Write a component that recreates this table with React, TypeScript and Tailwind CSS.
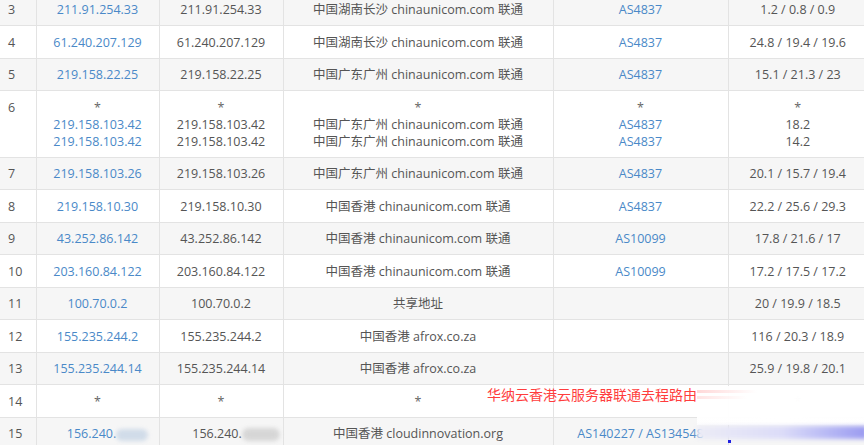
import React from "react";

type Cell = string | string[];
type Row = { n: string; ip: Cell; host: Cell; loc: Cell; asn: Cell; rtt: Cell; blur?: boolean };

const rows: Row[] = [
  { n: "3", ip: "211.91.254.33", host: "211.91.254.33", loc: "中国湖南长沙 chinaunicom.com 联通", asn: "AS4837", rtt: "1.2 / 0.8 / 0.9" },
  { n: "4", ip: "61.240.207.129", host: "61.240.207.129", loc: "中国湖南长沙 chinaunicom.com 联通", asn: "AS4837", rtt: "24.8 / 19.4 / 19.6" },
  { n: "5", ip: "219.158.22.25", host: "219.158.22.25", loc: "中国广东广州 chinaunicom.com 联通", asn: "AS4837", rtt: "15.1 / 21.3 / 23" },
  {
    n: "6",
    ip: ["*", "219.158.103.42", "219.158.103.42"],
    host: ["*", "219.158.103.42", "219.158.103.42"],
    loc: ["*", "中国广东广州 chinaunicom.com 联通", "中国广东广州 chinaunicom.com 联通"],
    asn: ["*", "AS4837", "AS4837"],
    rtt: ["*", "18.2", "14.2"],
  },
  { n: "7", ip: "219.158.103.26", host: "219.158.103.26", loc: "中国广东广州 chinaunicom.com 联通", asn: "AS4837", rtt: "20.1 / 15.7 / 19.4" },
  { n: "8", ip: "219.158.10.30", host: "219.158.10.30", loc: "中国香港 chinaunicom.com 联通", asn: "AS4837", rtt: "22.2 / 25.6 / 29.3" },
  { n: "9", ip: "43.252.86.142", host: "43.252.86.142", loc: "中国香港 chinaunicom.com 联通", asn: "AS10099", rtt: "17.8 / 21.6 / 17" },
  { n: "10", ip: "203.160.84.122", host: "203.160.84.122", loc: "中国香港 chinaunicom.com 联通", asn: "AS10099", rtt: "17.2 / 17.5 / 17.2" },
  { n: "11", ip: "100.70.0.2", host: "100.70.0.2", loc: "共享地址", asn: "", rtt: "20 / 19.9 / 18.5" },
  { n: "12", ip: "155.235.244.2", host: "155.235.244.2", loc: "中国香港 afrox.co.za", asn: "", rtt: "116 / 20.3 / 18.9" },
  { n: "13", ip: "155.235.244.14", host: "155.235.244.14", loc: "中国香港 afrox.co.za", asn: "", rtt: "25.9 / 19.8 / 20.1" },
  { n: "14", ip: "*", host: "*", loc: "*", asn: "", rtt: "*" },
  { n: "15", ip: "156.240.", host: "156.240.", loc: "中国香港 cloudinnovation.org", asn: "AS140227 / AS134548", rtt: "", blur: true },
];

function Line({ t }: { t: string }) {
  if (t === "*") return <div className="text-[#666666]">*</div>;
  return <div>{t || "\u00a0"}</div>;
}

function Lines({ c }: { c: Cell }) {
  if (Array.isArray(c)) {
    return (
      <>
        {c.map((t, i) => (
          <Line key={i} t={t} />
        ))}
      </>
    );
  }
  return <Line t={c} />;
}

const cellBase = "pt-[7.5px] pb-[7px] border-b border-[#e3e3e3] align-top";

export default function App() {
  return (
    <div
      className="relative w-[864px] h-[445px] overflow-hidden bg-white text-[#555555] text-[12.5px] leading-[17px]"
      style={{ fontFamily: '"Open Sans", "Noto Sans CJK SC", sans-serif' }}
    >
      <table className="-mt-[6.5px] w-[867px] border-collapse table-fixed">
        <colgroup>
          <col className="w-[36px]" />
          <col className="w-[123px]" />
          <col className="w-[124px]" />
          <col className="w-[270px]" />
          <col className="w-[175px]" />
          <col className="w-[139px]" />
        </colgroup>
        <tbody>
          {rows.map((r, i) => (
            <tr key={r.n} className={i % 2 === 0 ? "bg-[#f6f6f6]" : "bg-white"}>
              <td className={`${cellBase} pl-[8px] border-r`}>{r.n}</td>
              <td className={`${cellBase} text-center text-[#4a89c8] border-r`}>
                {r.blur ? (
                  <div className="flex justify-center">
                    <span className="pl-[20px]">{r.ip as string}</span>
                    <span className="inline-block w-[32px] h-[12px] mt-[4px] rounded-full bg-[#c8d6e6] blur-[2px] opacity-80" />
                  </div>
                ) : (
                  <Lines c={r.ip} />
                )}
              </td>
              <td className={`${cellBase} text-center border-r`}>
                {r.blur ? (
                  <div className="flex justify-center">
                    <span className="pl-[30px]">{r.host as string}</span>
                    <span className="inline-block w-[38px] h-[13px] mt-[3px] rounded-full bg-[#cfcfcf] blur-[2px] opacity-80" />
                  </div>
                ) : (
                  <Lines c={r.host} />
                )}
              </td>
              <td className={`${cellBase} text-center border-r`}>
                <Lines c={r.loc} />
              </td>
              <td className={`${cellBase} text-center text-[#4a89c8] border-r`}>
                <Lines c={r.asn} />
              </td>
              <td className={`${cellBase} text-center`}>
                <Lines c={r.rtt} />
              </td>
            </tr>
          ))}
        </tbody>
      </table>

      {/* watermark band */}
      <div className="absolute left-[697px] top-[386px] w-[167px] h-[39px] bg-gradient-to-r from-white/95 via-white to-white/95" />
      <div className="absolute left-[697px] top-[390px] w-[60px] h-[3px] bg-gradient-to-r from-[#ffc8c8] to-transparent opacity-70" />
      <div className="absolute left-[697px] top-[396px] w-[50px] h-[3px] bg-gradient-to-r from-[#ffd2d2] to-transparent opacity-60" />
      <div
        className="absolute left-[487px] top-[386px] text-[14px] leading-[17px] text-[#ff3d3d] whitespace-nowrap"
        style={{ fontFamily: '"Noto Sans CJK SC", sans-serif' }}
      >
        华纳云香港云服务器联通去程路由
      </div>

      {/* bottom right gradient smear */}
      <div className="absolute left-[697px] top-[426px] w-[170px] h-[13px] bg-gradient-to-r from-[#ececf6] via-[#dcdcf8] to-[#9a9af0] blur-[2px]" />
      <div className="absolute left-[728px] top-[440px] w-[3px] h-[3px] bg-[#2020e0]" />
    </div>
  );
}
